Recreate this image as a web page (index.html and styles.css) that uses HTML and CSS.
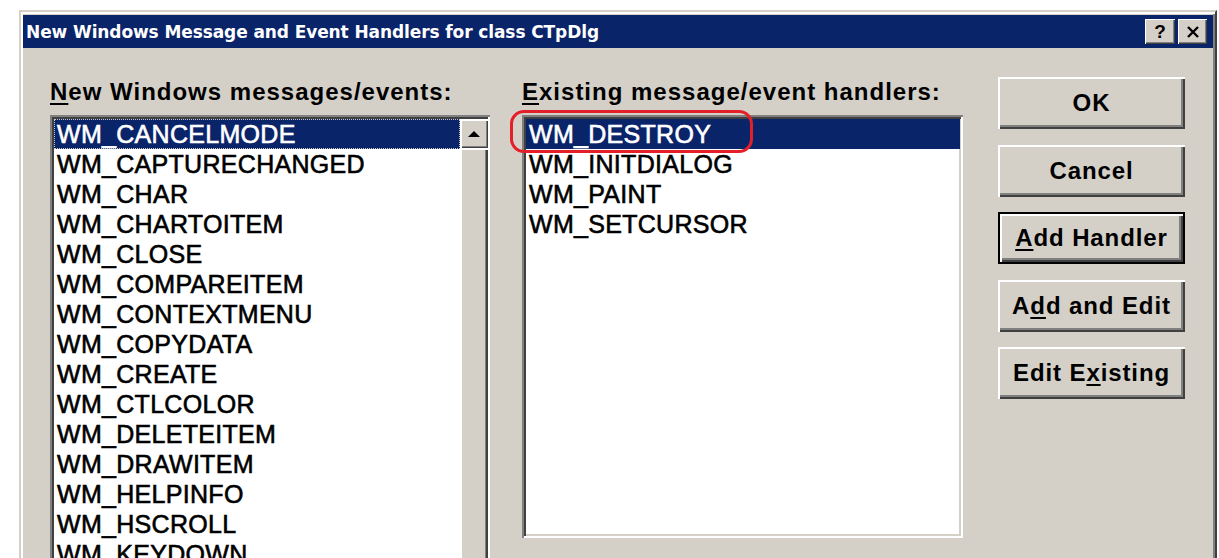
FILE: index.html
```html
<!DOCTYPE html>
<html>
<head>
<meta charset="utf-8">
<title>New Windows Message and Event Handlers</title>
<link rel="stylesheet" href="styles.css">
</head>
<body>
<div class="window">
  <div class="titlebar">
    <span class="title">New Windows Message and Event Handlers for class CTpDlg</span>
    <div class="tbtns">
      <span class="tbtn help">?</span>
      <span class="tbtn close"><svg width="14" height="12" viewBox="0 0 14 12"><path d="M2 1 L12 11 M12 1 L2 11" stroke="#000" stroke-width="2.4" fill="none"/></svg></span>
    </div>
  </div>
  <div class="content">
    <div class="col col-new">
      <div class="label"><u>N</u>ew Windows messages/events:</div>
      <div class="listbox listbox-new">
        <ul class="items">
          <li class="sel focus">WM_CANCELMODE</li>
          <li>WM_CAPTURECHANGED</li>
          <li>WM_CHAR</li>
          <li>WM_CHARTOITEM</li>
          <li>WM_CLOSE</li>
          <li>WM_COMPAREITEM</li>
          <li>WM_CONTEXTMENU</li>
          <li>WM_COPYDATA</li>
          <li>WM_CREATE</li>
          <li>WM_CTLCOLOR</li>
          <li>WM_DELETEITEM</li>
          <li>WM_DRAWITEM</li>
          <li>WM_HELPINFO</li>
          <li>WM_HSCROLL</li>
          <li>WM_KEYDOWN</li>
        </ul>
        <div class="scrollbar">
          <div class="sb-arrow"><svg width="12" height="6" viewBox="0 0 12 6"><polygon points="0,6 6,0 12,6" fill="#000"/></svg></div>
          <div class="sb-thumb"></div>
        </div>
      </div>
    </div>
    <div class="col col-existing">
      <div class="label"><u>E</u>xisting message/event handlers:</div>
      <div class="listbox listbox-existing">
        <ul class="items">
          <li class="sel">WM_DESTROY</li>
          <li>WM_INITDIALOG</li>
          <li>WM_PAINT</li>
          <li>WM_SETCURSOR</li>
        </ul>
        <div class="annotation"></div>
      </div>
    </div>
    <div class="buttons">
      <div class="btn">OK</div>
      <div class="btn">Cancel</div>
      <div class="btn default"><span><u>A</u>dd Handler</span></div>
      <div class="btn"><span>A<u>d</u>d and Edit</span></div>
      <div class="btn"><span>Edit E<u>x</u>isting</span></div>
    </div>
  </div>
</div>
</body>
</html>
```
FILE: styles.css
```css
html, body {
  margin: 0;
  padding: 0;
  background: #ffffff;
  height: 558px;
  overflow: hidden;
}

.window {
  margin: 10px 0 0 19px;
  width: 1198px;
  height: 620px;
  box-sizing: border-box;
  background: #d4d0c8;
  border: 2px solid;
  border-color: #d4d0c8 #404040 #404040 #d4d0c8;
  box-shadow: inset 2px 2px #ffffff, inset -2px -2px #808080;
  padding: 3px 2px 0 2px;
  font-family: "Liberation Sans", Arial, sans-serif;
  color: #000;
}

.titlebar {
  height: 33px;
  background: #0a246a;
  display: flex;
  align-items: center;
  justify-content: space-between;
  padding: 0 6px 0 3px;
}

.title {
  color: #ffffff;
  font-family: "DejaVu Sans", Verdana, sans-serif;
  font-weight: bold;
  font-size: 17px;
  letter-spacing: -0.1px;
  white-space: nowrap;
}

.tbtns {
  display: flex;
  gap: 3px;
}

.tbtn {
  width: 30px;
  height: 25px;
  box-sizing: border-box;
  background: #d4d0c8;
  box-shadow: inset 1px 1px #ffffff, inset -1px -1px #404040, inset -2px -2px #808080;
  display: flex;
  align-items: center;
  justify-content: center;
}

.tbtn.help {
  font-weight: bold;
  font-size: 19px;
  line-height: 25px;
}

.tbtn.close {
  width: 29px;
}

.content {
  display: flex;
  padding: 29px 0 0 27px;
}

.col-new {
  width: 440px;
  margin-right: 32px;
}

.col-existing {
  width: 441px;
  margin-right: 35px;
}

.label {
  font-weight: bold;
  font-size: 24px;
  letter-spacing: 1px;
  line-height: 28px;
  margin-top: 1px;
  margin-bottom: 9px;
  white-space: nowrap;
}

u {
  text-decoration-thickness: 2px;
  text-underline-offset: 3px;
}

.listbox {
  background: #ffffff;
  box-sizing: border-box;
  box-shadow: inset 2px 2px #808080, inset -2px -2px #ffffff, inset 4px 4px #404040, inset -4px -4px #d4d0c8;
  padding: 4px 2px 4px 4px;
  display: flex;
  overflow: hidden;
}

.listbox-new {
  height: 470px;
}

.listbox-existing {
  height: 423px;
  position: relative;
  overflow: visible;
  padding-right: 3px;
}

.items {
  list-style: none;
  margin: 0;
  padding: 0;
  flex: 1;
  min-width: 0;
}

.items li {
  height: 30px;
  line-height: 30px;
  padding-left: 3px;
  font-size: 25px;
  letter-spacing: 0.3px;
  white-space: nowrap;
  -webkit-text-stroke: 0.6px currentColor;
}

.items li.sel {
  background: #0a246a;
  color: #ffffff;
}

.items li.focus {
  outline: 1px dotted #c8c8c8;
  outline-offset: -1px;
}

.scrollbar {
  width: 28px;
  display: flex;
  flex-direction: column;
}

.sb-arrow {
  height: 29px;
  box-sizing: border-box;
  background: #d4d0c8;
  box-shadow: inset 2px 2px #ffffff, inset -1px -1px #404040, inset -2px -2px #808080;
  display: flex;
  align-items: center;
  justify-content: center;
}

.sb-thumb {
  flex: 1;
  background: #d4d0c8;
  box-shadow: inset 2px 2px #ffffff, inset -2px 0 #404040, inset -3px 0 #808080;
}

.annotation {
  position: absolute;
  left: -12px;
  top: -5px;
  width: 243px;
  height: 43px;
  box-sizing: border-box;
  border: 3px solid #e3202a;
  border-radius: 14px;
}

.buttons {
  width: 187px;
  display: flex;
  flex-direction: column;
  gap: 15.5px;
}

.btn {
  height: 52px;
  box-sizing: border-box;
  background: #d4d0c8;
  box-shadow: inset 2px 2px #ffffff, inset -2px -2px #404040, inset -4px -4px #808080;
  display: flex;
  align-items: center;
  justify-content: center;
  font-weight: bold;
  font-size: 24px;
  letter-spacing: 0.9px;
  white-space: nowrap;
}

.btn.default {
  border: 2px solid #000000;
}
```
